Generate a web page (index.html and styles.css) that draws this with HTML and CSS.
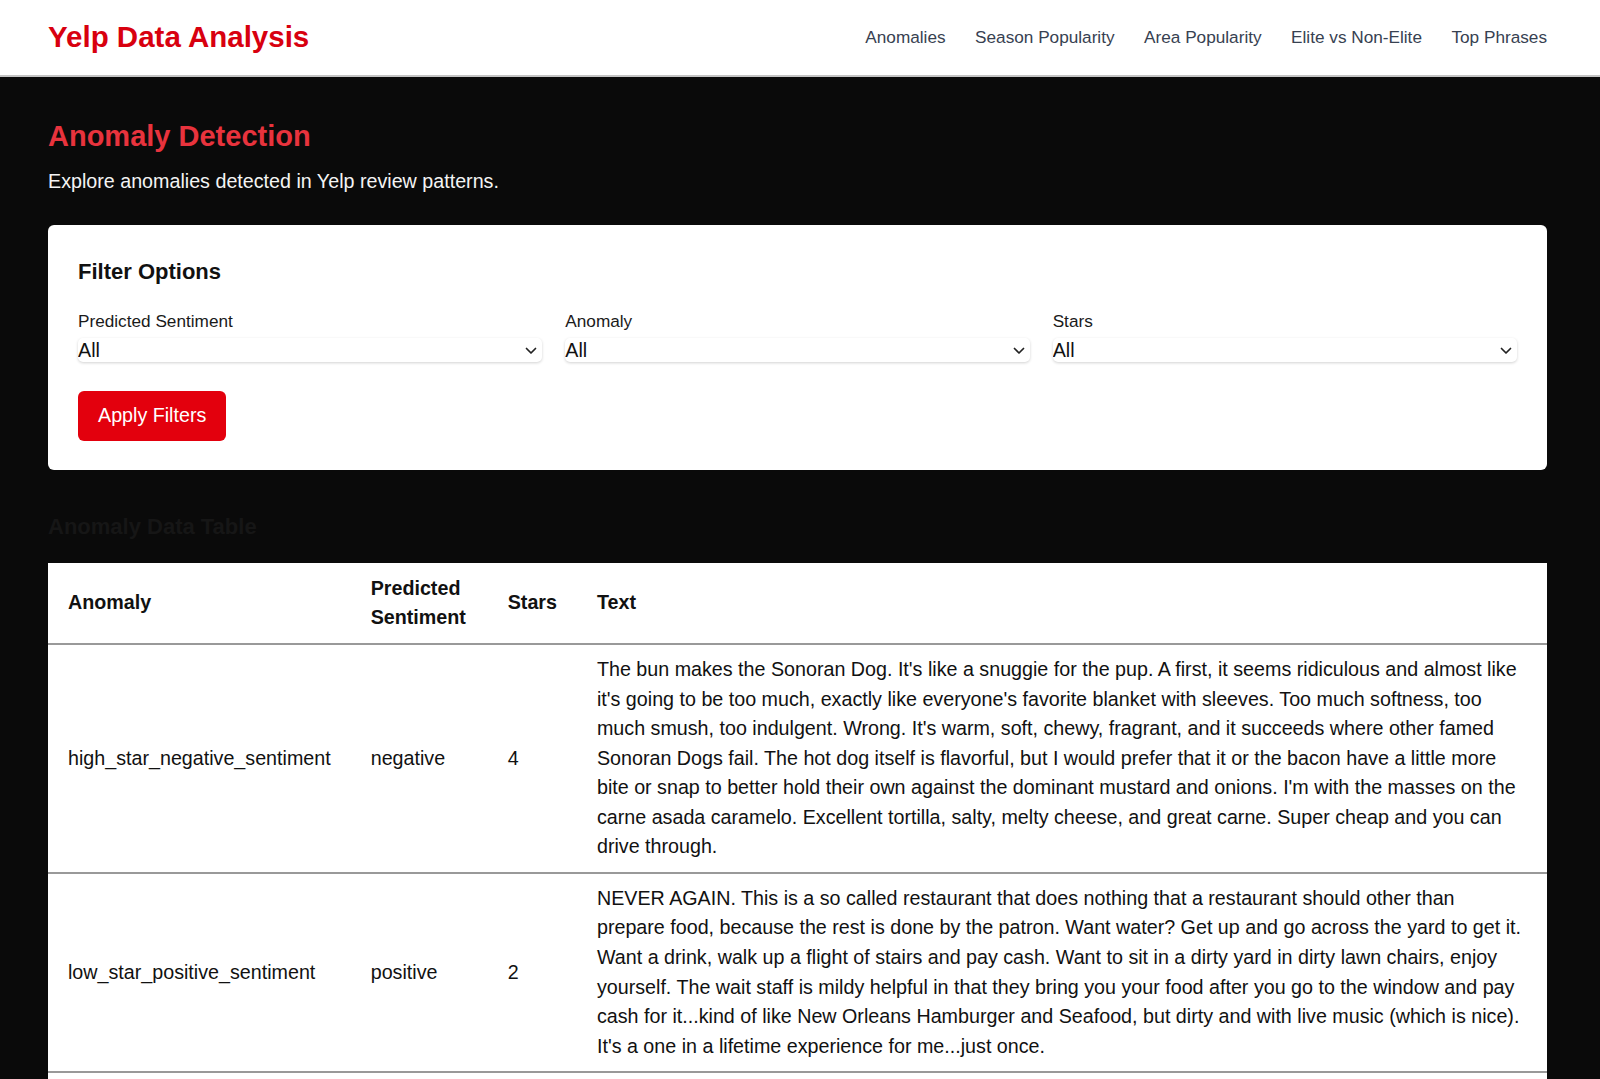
FILE: index.html
```html
<!DOCTYPE html>
<html lang="en">
<head>
<meta charset="utf-8">
<title>Yelp Data Analysis</title>
<link rel="stylesheet" href="styles.css">
</head>
<body>
<header class="site-header">
  <div class="brand">Yelp Data Analysis</div>
  <nav class="nav">
    <a href="#" class="nav-link">Anomalies</a>
    <a href="#" class="nav-link">Season Popularity</a>
    <a href="#" class="nav-link">Area Popularity</a>
    <a href="#" class="nav-link">Elite vs Non-Elite</a>
    <a href="#" class="nav-link">Top Phrases</a>
  </nav>
</header>
<main class="main">
  <h1 class="page-title">Anomaly Detection</h1>
  <p class="page-subtitle">Explore anomalies detected in Yelp review patterns.</p>

  <section class="filter-card">
    <h3 class="filter-title">Filter Options</h3>
    <div class="filter-grid">
      <div class="filter-field">
        <label class="filter-label">Predicted Sentiment</label>
        <div class="select-wrap">
          <select class="filter-select"><option>All</option><option>positive</option><option>negative</option></select>
          <svg class="chevron" width="12" height="8" viewBox="0 0 12 8"><path d="M1.5 1.5 L6 6 L10.5 1.5" fill="none" stroke="#222" stroke-width="1.7" stroke-linecap="round" stroke-linejoin="round"/></svg>
        </div>
      </div>
      <div class="filter-field">
        <label class="filter-label">Anomaly</label>
        <div class="select-wrap">
          <select class="filter-select"><option>All</option><option>high_star_negative_sentiment</option><option>low_star_positive_sentiment</option></select>
          <svg class="chevron" width="12" height="8" viewBox="0 0 12 8"><path d="M1.5 1.5 L6 6 L10.5 1.5" fill="none" stroke="#222" stroke-width="1.7" stroke-linecap="round" stroke-linejoin="round"/></svg>
        </div>
      </div>
      <div class="filter-field">
        <label class="filter-label">Stars</label>
        <div class="select-wrap">
          <select class="filter-select"><option>All</option><option>1</option><option>2</option><option>3</option><option>4</option><option>5</option></select>
          <svg class="chevron" width="12" height="8" viewBox="0 0 12 8"><path d="M1.5 1.5 L6 6 L10.5 1.5" fill="none" stroke="#222" stroke-width="1.7" stroke-linecap="round" stroke-linejoin="round"/></svg>
        </div>
      </div>
    </div>
    <button class="apply-btn">Apply Filters</button>
  </section>

  <h2 class="table-title">Anomaly Data Table</h2>
  <div class="table-card">
    <table class="data-table">
      <thead>
        <tr>
          <th class="col-anomaly">Anomaly</th>
          <th class="col-sentiment">Predicted Sentiment</th>
          <th class="col-stars">Stars</th>
          <th class="col-text">Text</th>
        </tr>
      </thead>
      <tbody>
        <tr>
          <td>high_star_negative_sentiment</td>
          <td>negative</td>
          <td>4</td>
          <td>The bun makes the Sonoran Dog. It's like a snuggie for the pup. A first, it seems ridiculous and almost like it's going to be too much, exactly like everyone's favorite blanket with sleeves. Too much softness, too much smush, too indulgent. Wrong. It's warm, soft, chewy, fragrant, and it succeeds where other famed Sonoran Dogs fail. The hot dog itself is flavorful, but I would prefer that it or the bacon have a little more bite or snap to better hold their own against the dominant mustard and onions. I'm with the masses on the carne asada caramelo. Excellent tortilla, salty, melty cheese, and great carne. Super cheap and you can drive through.</td>
        </tr>
        <tr>
          <td>low_star_positive_sentiment</td>
          <td>positive</td>
          <td>2</td>
          <td>NEVER AGAIN. This is a so called restaurant that does nothing that a restaurant should other than prepare food, because the rest is done by the patron. Want water? Get up and go across the yard to get it. Want a drink, walk up a flight of stairs and pay cash. Want to sit in a dirty yard in dirty lawn chairs, enjoy yourself. The wait staff is mildy helpful in that they bring you your food after you go to the window and pay cash for it...kind of like New Orleans Hamburger and Seafood, but dirty and with live music (which is nice). It's a one in a lifetime experience for me...just once.</td>
        </tr>
      </tbody>
    </table>
  </div>
</main>
</body>
</html>
```

FILE: styles.css
```css
* {
  box-sizing: border-box;
}

html, body {
  margin: 0;
  padding: 0;
}

body {
  background: #0a0a0a;
  font-family: "Liberation Sans", Arial, Helvetica, sans-serif;
  color: #111;
}

.site-header {
  display: flex;
  justify-content: space-between;
  align-items: center;
  height: 77px;
  padding: 0 53px 0 48px;
  background: #fff;
  border-bottom: 2px solid #c4c4c4;
}

.brand {
  color: #d8000f;
  font-weight: 700;
  font-size: 29.5px;
  margin-top: -1px;
}

.nav {
  display: flex;
  gap: 29.5px;
}

.nav-link {
  color: #374151;
  font-size: 17.2px;
  text-decoration: none;
}

.main {
  padding: 43px 53px 40px 48px;
}

.page-title {
  margin: 0;
  color: #e8333d;
  font-size: 29px;
  font-weight: 700;
  line-height: normal;
}

.page-subtitle {
  margin: 17px 0 0;
  color: #f4f4f4;
  font-size: 19.7px;
  line-height: normal;
}

.filter-card {
  margin-top: 31.5px;
  background: #fff;
  border-radius: 6px;
  padding: 34px 30px 29px;
}

.filter-title {
  margin: 0 0 26px;
  font-size: 22px;
  font-weight: 700;
  line-height: normal;
  color: #111;
}

.filter-grid {
  display: grid;
  grid-template-columns: 1fr 1fr 1fr;
  gap: 23px;
}

.filter-field {
  display: flex;
  flex-direction: column;
  gap: 6px;
}

.filter-label {
  font-size: 17.2px;
  color: #1a1a1a;
  line-height: normal;
}

.select-wrap {
  position: relative;
}

.filter-select {
  display: block;
  width: 100%;
  height: 24px;
  padding: 0;
  margin: 0;
  border: none;
  border-radius: 5px;
  background: #fff;
  box-shadow: 0 1px 3px rgba(0, 0, 0, 0.18);
  font-family: inherit;
  font-size: 19.7px;
  color: #111;
  -webkit-appearance: none;
  appearance: none;
  outline: none;
}

.chevron {
  position: absolute;
  right: 5px;
  top: 9px;
  pointer-events: none;
}

.apply-btn {
  display: block;
  margin-top: 29px;
  padding: 13.5px 20px;
  background: #e3000d;
  color: #fff;
  border: none;
  border-radius: 6px;
  font-family: inherit;
  font-size: 19.7px;
  line-height: normal;
}

.table-title {
  margin: 44.5px 0 0;
  color: #161616;
  font-size: 22px;
  font-weight: 700;
  line-height: normal;
}

.table-card {
  margin-top: 23px;
  background: #fff;
  padding-bottom: 40px;
}

.data-table {
  width: 100%;
  border-collapse: collapse;
  font-size: 19.7px;
  line-height: 1.5;
  color: #111;
}

.data-table th,
.data-table td {
  padding: 10px 20px;
  text-align: left;
  vertical-align: middle;
  border-bottom: 2px solid #999;
}

.data-table th {
  padding-top: 10.5px;
  padding-bottom: 10.5px;
  font-weight: 700;
}

.col-sentiment {
  width: 137px;
}

.col-stars {
  width: 89px;
}
```
